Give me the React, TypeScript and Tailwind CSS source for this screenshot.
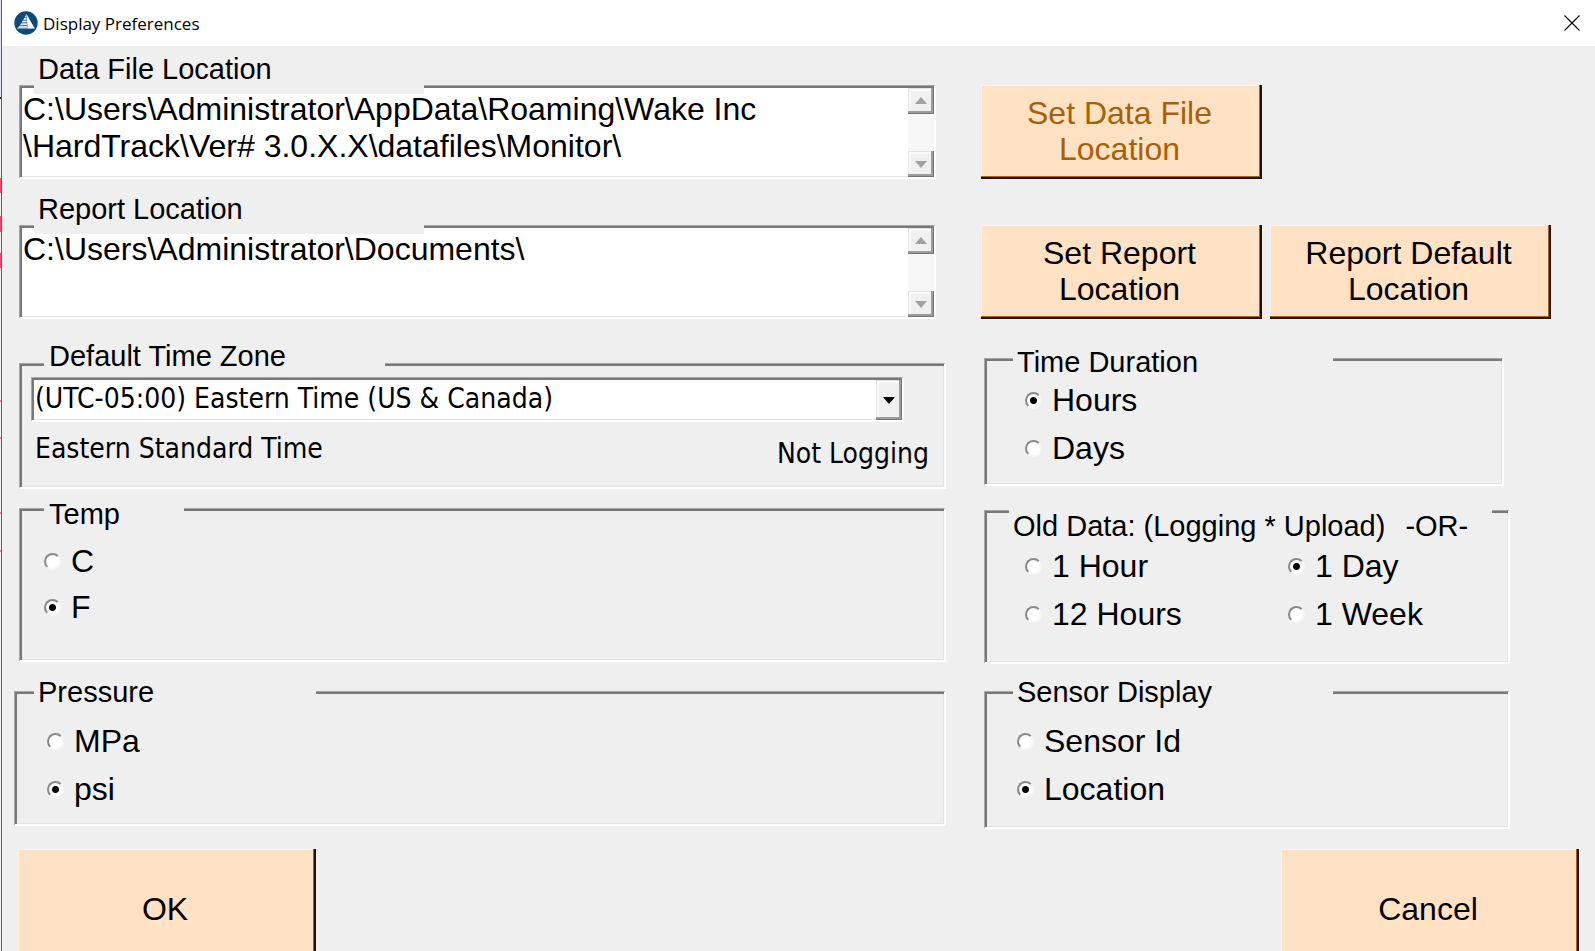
import React, { useState } from "react";

const SUNKEN =
  "border-t border-l border-r-2 border-b-2 border-t-[#a6a6a6] border-l-[#a6a6a6] border-r-white border-b-white shadow-[inset_2px_2px_0_#787878,inset_-1px_-1px_0_#e3e3e3]";
const RAISED =
  "flex items-center justify-center bg-[#f0f0f0] shadow-[inset_-1px_-1px_0_#747474,inset_-3px_-3px_0_#9c9c9c,inset_1px_1px_0_#e3e3e3,inset_3px_3px_0_#fafafa]";
const TAHOMA = "font-['DejaVu_Sans_Condensed','DejaVu_Sans',sans-serif]";

function AppIcon() {
  return (
    <svg viewBox="0 0 24 24" className="size-6" aria-hidden="true">
      <circle cx="12" cy="12" r="11.7" fill="#0b4a7a" />
      <path d="M12.2 2.6 L20.6 17.2 H13.8 Z" fill="#fff" />
      <path
        d="M11.4 4 L12.2 6.4 H10.6 Z M10.2 7 H12.4 L12.6 8.8 H9.2 Z M8.7 9.6 H12.6 L12.8 11.4 H7.7 Z M7.1 12.2 H12.9 L13.1 14 H6.1 Z M5.3 14.7 H13.3 L13.5 16.2 H4.3 Z M3.6 16.6 H20.6 V17.6 H3 Z"
        fill="#e4edf4"
      />
    </svg>
  );
}

function Arrow({ up = false, className }: { up?: boolean; className: string }) {
  return (
    <svg viewBox="0 0 12 7" className={`h-[7px] w-3 ${className}`} aria-hidden="true">
      <path d={up ? "M6 0 L12 7 H0 Z" : "M0 0 H12 L6 7 Z"} fill="currentColor" />
    </svg>
  );
}

function PathField({ id, label, value }: { id: string; label: string; value: string }) {
  return (
    <div className="mr-[10px] ml-[5px]">
      <label
        htmlFor={id}
        className="relative z-10 -mb-[9px] ml-[15px] block h-[41px] w-[390px] bg-[#efefef] pl-1 text-[29px] leading-8"
      >
        {label}
      </label>
      <div className={`flex h-[94px] bg-white pt-0.5 pl-0.5 ${SUNKEN}`}>
        <textarea
          id={id}
          readOnly
          value={value}
          className="min-w-0 flex-1 resize-none overflow-hidden bg-transparent pt-[3px] pl-px text-[32px] leading-[37px] outline-none"
        />
        <div className="flex w-[26px] flex-col justify-between bg-[#f7f7f7]">
          <button type="button" aria-label="Scroll up" className={`h-[26px] pb-0.5 ${RAISED}`}>
            <Arrow up className="text-[#a0a0a0]" />
          </button>
          <button type="button" aria-label="Scroll down" className={`h-[26px] ${RAISED}`}>
            <Arrow className="text-[#a0a0a0]" />
          </button>
        </div>
      </div>
    </div>
  );
}

function Group({
  legend,
  legendClass,
  className,
  children,
}: {
  legend: React.ReactNode;
  legendClass: string;
  className: string;
  children: React.ReactNode;
}) {
  return (
    <fieldset className={`relative min-w-0 ${SUNKEN} ${className}`}>
      <legend className={`absolute bg-[#efefef] text-[29px] leading-8 whitespace-nowrap ${legendClass}`}>
        {legend}
      </legend>
      {children}
    </fieldset>
  );
}

function Radios({
  name,
  options,
  initial,
  className = "",
  rowClass = "h-12",
}: {
  name: string;
  options: string[];
  initial: string;
  className?: string;
  rowClass?: string;
}) {
  const [value, setValue] = useState(initial);
  return (
    <div className={className}>
      {options.map((o) => (
        <label key={o} className={`flex items-center gap-[10px] text-[32px] leading-9 ${rowClass}`}>
          <input
            type="radio"
            name={name}
            checked={value === o}
            onChange={() => setValue(o)}
            className="size-[17px] shrink-0 appearance-none rounded-full border-2 border-t-[#8a8a8a] border-r-[#f7f7f7] border-b-[#f7f7f7] border-l-[#8a8a8a] bg-white checked:bg-[radial-gradient(circle,#000_3px,#fff_4px)]"
          />
          {o}
        </label>
      ))}
    </div>
  );
}

function PeachButton({
  children,
  className,
  disabled = false,
}: {
  children: React.ReactNode;
  className: string;
  disabled?: boolean;
}) {
  return (
    <button
      type="button"
      disabled={disabled}
      className={`bg-[#ffe2c4] pr-6 pl-5 text-[32px] leading-9 shadow-[inset_-2px_-2px_0_#1c1206,inset_-3px_-3px_0_#a86414,inset_1px_1px_0_#fff0df] disabled:text-[#a86008] ${className}`}
    >
      {children}
    </button>
  );
}

export default function App() {
  return (
    <div className="flex h-screen overflow-hidden bg-[#efefef] font-['Liberation_Sans',Arial,sans-serif] text-black">
      <div className="w-px shrink-0 bg-[linear-gradient(#dfe3ea_0_97px,#222_97px_99px,#eef0f4_99px_178px,#ff4a70_178px_193px,#eef0f4_193px_216px,#ff4a70_216px_232px,#eef0f4_232px_253px,#ff4a70_253px_268px,#eef0f4_268px_400px,#ff7d98_400px_402px,#eef0f4_402px_437px,#ff7d98_437px_439px,#eef0f4_439px_512px,#ff7d98_512px_514px,#eef0f4_514px_550px,#ff7d98_550px_552px,#eef0f4_552px)]" />
      <div className="min-w-0 flex-1 border-l border-[#1b74bd]">
        <header className="flex h-[46px] items-center bg-white pr-[15px] pl-3">
          <AppIcon />
          <h1 className="ml-[5px] flex-1 pt-0.5 font-['Open_Sans','Noto_Sans',sans-serif] text-[17px] leading-6">
            Display Preferences
          </h1>
          <button type="button" aria-label="Close">
            <svg viewBox="0 0 16 16" className="size-4" aria-hidden="true">
              <path d="M0.5 0.5 L15.5 15.5 M15.5 0.5 L0.5 15.5" stroke="#000" strokeWidth="1.1" />
            </svg>
          </button>
        </header>

        <main className="pt-[7px] pr-4 pl-3">
          <div className="grid grid-cols-[932fr_598fr] gap-x-[35px]">
            <div className="min-w-0">
              <PathField
                id="data-path"
                label="Data File Location"
                value={"C:\\Users\\Administrator\\AppData\\Roaming\\Wake Inc\n\\HardTrack\\Ver# 3.0.X.X\\datafiles\\Monitor\\"}
              />
              <div className="h-[14px]" />
              <PathField id="report-path" label="Report Location" value={"C:\\Users\\Administrator\\Documents\\"} />

              <Group
                legend="Default Time Zone"
                legendClass="-top-6 left-6 w-[341px] pl-[5px]"
                className="mt-11 ml-[5px] min-h-[126px] pt-[13px] pr-[15px] pl-[11px]"
              >
                <div className={`relative mr-[25px] h-[45px] bg-white ${SUNKEN}`}>
                  <select
                    aria-label="Default Time Zone"
                    className={`size-full appearance-none bg-transparent pl-[3px] text-[28px] leading-9 outline-none ${TAHOMA}`}
                  >
                    <option>(UTC-05:00) Eastern Time (US &amp; Canada)</option>
                  </select>
                  <span className={`pointer-events-none absolute top-0.5 right-0 bottom-0 w-[26px] ${RAISED}`}>
                    <Arrow className="text-black" />
                  </span>
                </div>
                <div className={`flex items-end justify-between pl-1 text-[28px] leading-8 ${TAHOMA}`}>
                  <p className="pt-[11px] pb-[5px]">Eastern Standard Time</p>
                  <p>Not Logging</p>
                </div>
              </Group>

              <Group
                legend="Temp"
                legendClass="-top-[11px] left-6 w-[140px] pl-[5px]"
                className="mt-[19px] ml-[5px] min-h-[154px] pt-[29px] pl-6"
              >
                <Radios name="temp" options={["C", "F"]} initial="F" rowClass="h-[46px]" />
              </Group>

              <Group
                legend="Pressure"
                legendClass="-top-4 left-[19px] w-[282px] pl-1"
                className="mt-[29px] min-h-[135px] pt-[25px] pl-8"
              >
                <Radios name="pressure" options={["MPa", "psi"]} initial="psi" />
              </Group>
            </div>

            <div className="min-w-0 pt-8">
              <PeachButton disabled className="block h-[94px] w-[281px] pb-0.5">
                Set Data File Location
              </PeachButton>
              <div className="mt-[46px] flex gap-2">
                <PeachButton className="h-[94px] w-[281px] pb-0.5">Set Report Location</PeachButton>
                <PeachButton className="h-[94px] w-[281px] pb-0.5">Report Default Location</PeachButton>
              </div>

              <Group
                legend="Time Duration"
                legendClass="-top-[13px] left-7 w-[320px] pl-1"
                className="mt-[39px] mr-[75px] ml-[3px] min-h-[128px] pt-[17px] pl-10"
              >
                <Radios name="duration" options={["Hours", "Days"]} initial="Hours" />
              </Group>

              <Group
                legend={
                  <>
                    Old Data: (Logging * Upload)<span className="ml-5">-OR-</span>
                  </>
                }
                legendClass="-top-px left-6 w-[483px] pl-1"
                className="mt-6 mr-[69px] ml-[3px] min-h-[154px] pt-[31px] pl-10"
              >
                <Radios
                  name="old-data"
                  options={["1 Hour", "1 Day", "12 Hours", "1 Week"]}
                  initial="1 Day"
                  className="grid grid-cols-[263fr_220fr]"
                />
              </Group>

              <Group
                legend="Sensor Display"
                legendClass="-top-4 left-7 w-[320px] pl-1"
                className="mt-[27px] mr-[69px] ml-[3px] min-h-[138px] pt-[25px] pl-8"
              >
                <Radios name="sensor" options={["Sensor Id", "Location"]} initial="Location" />
              </Group>
            </div>
          </div>

          <div className="mt-5 flex justify-between pl-1">
            <PeachButton className="h-[120px] w-[298px]">OK</PeachButton>
            <PeachButton className="h-[120px] w-[298px]">Cancel</PeachButton>
          </div>
        </main>
      </div>
    </div>
  );
}
